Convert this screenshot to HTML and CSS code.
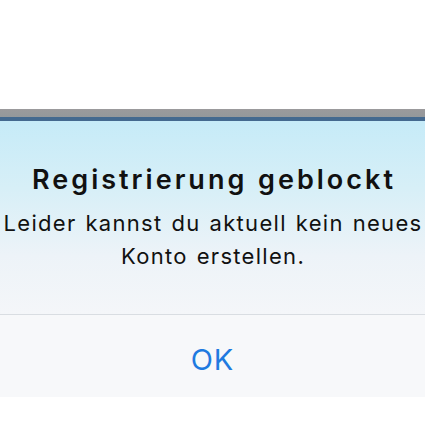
FILE: index.html
```html
<!DOCTYPE html>
<html lang="de">
<head>
<meta charset="utf-8">
<link rel="stylesheet" href="styles.css">
</head>
<body>
<div class="spacer"></div>
<div class="alert">
  <div class="bar-gray"></div>
  <div class="bar-blue"></div>
  <div class="content">
    <h1 class="title">Registrierung geblockt</h1>
    <p class="message">Leider kannst du aktuell kein neues<br>Konto erstellen.</p>
  </div>
  <div class="divider"></div>
  <div class="button">OK</div>
</div>
</body>
</html>
```
FILE: styles.css
```css
html, body {
  margin: 0;
  padding: 0;
  background: #ffffff;
  width: 425px;
  height: 426px;
  overflow: hidden;
  font-family: Inter, "Noto Sans", sans-serif;
}
.spacer {
  height: 109px;
}
.alert {
  display: flex;
  flex-direction: column;
}
.bar-gray {
  height: 8px;
  background: linear-gradient(#9b9a9c, #94989b);
}
.bar-blue {
  height: 4px;
  background: #44698f;
}
.content {
  height: 193px;
  box-sizing: border-box;
  background: linear-gradient(#c6ebf8 0%, #d7eff7 35%, #edf3f8 70%, #f4f6f9 100%);
  display: flex;
  flex-direction: column;
  align-items: center;
  padding-top: 42px;
}
.title {
  margin: 0 0 0 3px;
  font-size: 27px;
  line-height: 34px;
  font-weight: 600;
  color: #111111;
  letter-spacing: 3px;
  word-spacing: 1px;
  white-space: nowrap;
}
.message {
  margin: 10px 0 0 1px;
  font-size: 22px;
  line-height: 33px;
  font-weight: 400;
  color: #111111;
  text-align: center;
  white-space: nowrap;
  letter-spacing: 1.3px;
  word-spacing: 1.5px;
}
.divider {
  height: 1px;
  background: #d9dde2;
}
.button {
  height: 82px;
  background: #f7f8fa;
  display: flex;
  align-items: center;
  justify-content: center;
  font-size: 29px;
  color: #1f7ae0;
  padding-top: 6px;
  box-sizing: border-box;
  letter-spacing: 1px;
}
```
